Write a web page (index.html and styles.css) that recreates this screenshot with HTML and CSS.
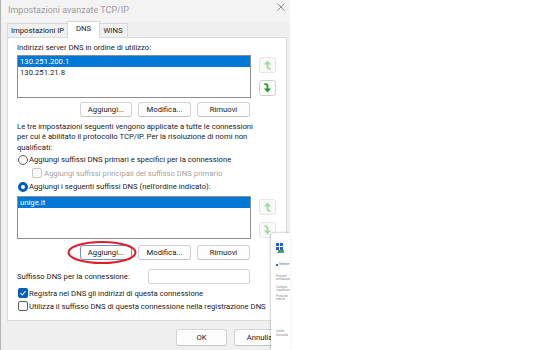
FILE: index.html
```html
<!DOCTYPE html>
<html>
<head>
<meta charset="utf-8">
<link rel="stylesheet" href="styles.css">
</head>
<body>
<div class="dialog">
  <div class="titlebar">
    <span class="title">Impostazioni avanzate TCP/IP</span>
    <svg class="close" width="8" height="8" viewBox="0 0 8 8"><path d="M0.5 0.5 L7.5 7.5 M7.5 0.5 L0.5 7.5" stroke="#8c8c8c" stroke-width="1" fill="none"/></svg>
  </div>
  <div class="tabs">
    <div class="tab t1">Impostazioni IP</div>
    <div class="tab t2 active">DNS</div>
    <div class="tab t3">WINS</div>
  </div>
  <div class="panel">
    <div class="lbl1">Indirizzi server DNS in ordine di utilizzo:</div>
    <div class="listrow">
      <div class="list">
        <div class="item sel">130.251.200.1</div>
        <div class="item">130.251.21.8</div>
      </div>
      <div class="arrows">
        <div class="arrbtn dis"><svg width="9" height="10" viewBox="0 0 10 11"><polygon points="5,0.5 9,5 1,5" fill="#9edb9e"/><path d="M5 4.5 V7.8 Q5 9.8 7.2 9.8 H8.5" stroke="#9edb9e" stroke-width="2" fill="none"/></svg></div>
        <div class="arrbtn"><svg width="9" height="10" viewBox="0 0 10 11"><polygon points="5,10.5 9,6 1,6" fill="#1d9e27"/><path d="M5 6.5 V3.2 Q5 1.2 2.8 1.2 H1.5" stroke="#1d9e27" stroke-width="2" fill="none"/></svg></div>
      </div>
    </div>
    <div class="btnrow">
      <div class="btn w52">Aggiungi...</div>
      <div class="btn">Modifica...</div>
      <div class="btn">Rimuovi</div>
    </div>
    <p class="para">Le tre impostazioni seguenti vengono applicate a tutte le connessioni<br>per cui è abilitato il protocollo TCP/IP. Per la risoluzione di nomi non<br>qualificati:</p>
    <div class="opt r1"><span class="radio"></span><span>Aggiungi suffissi DNS primari e specifici per la connessione</span></div>
    <div class="opt c0 disabled"><span class="check dis"></span><span>Aggiungi suffissi principali del suffisso DNS primario</span></div>
    <div class="opt r2"><span class="radio on"></span><span>Aggiungi i seguenti suffissi DNS (nell'ordine indicato):</span></div>
    <div class="listrow lr2">
      <div class="list">
        <div class="item sel">unige.it</div>
      </div>
      <div class="arrows a2">
        <div class="arrbtn dis"><svg width="9" height="10" viewBox="0 0 10 11"><polygon points="5,0.5 9,5 1,5" fill="#9edb9e"/><path d="M5 4.5 V7.8 Q5 9.8 7.2 9.8 H8.5" stroke="#9edb9e" stroke-width="2" fill="none"/></svg></div>
        <div class="arrbtn dis"><svg width="9" height="10" viewBox="0 0 10 11"><polygon points="5,10.5 9,6 1,6" fill="#9edb9e"/><path d="M5 6.5 V3.2 Q5 1.2 2.8 1.2 H1.5" stroke="#9edb9e" stroke-width="2" fill="none"/></svg></div>
      </div>
    </div>
    <div class="btnrow br2">
      <div class="btn w52 def">Aggiungi...</div>
      <div class="btn">Modifica...</div>
      <div class="btn">Rimuovi</div>
      <svg class="ring" width="70" height="25" viewBox="0 0 70 25"><ellipse cx="35" cy="12.5" rx="33.5" ry="10.5" fill="none" stroke="#dc1f2a" stroke-width="2"/></svg>
    </div>
    <div class="sufrow">
      <span class="suflbl">Suffisso DNS per la connessione:</span>
      <span class="input"></span>
    </div>
    <div class="opt k1"><span class="check on"><svg width="8" height="8" viewBox="0 0 8 8"><path d="M1.5 4.2 L3.3 6 L6.6 2" stroke="#fff" stroke-width="1.1" fill="none"/></svg></span><span>Registra nel DNS gli indirizzi di questa connessione</span></div>
    <div class="opt k2"><span class="check"></span><span>Utilizza il suffisso DNS di questa connessione nella registrazione DNS</span></div>
  </div>
  <div class="footer">
    <div class="btn fb">OK</div>
    <div class="btn fb">Annulla</div>
  </div>
</div>
<div class="miniwin">
  <svg class="miniicon" width="9" height="11" viewBox="0 0 9 11"><rect x="0" y="0" width="3" height="3" fill="#2a5bd0"/><rect x="4" y="0" width="3" height="3" fill="#2a5bd0"/><rect x="0" y="4" width="3" height="3" fill="#2a5bd0"/><rect x="4" y="4" width="3" height="3" fill="#2a5bd0"/><rect x="2" y="7" width="6" height="2" fill="#2fae3a"/><rect x="1" y="9" width="7" height="1" fill="#6b8bd8"/></svg>
  <div class="mline m1"><span class="mdot"></span>Generale</div>
  <div class="mline m2">- - -</div>
  <div class="mline m3">Proprietà<br>connessione</div>
  <div class="mline m4">Configura<br>impostazioni</div>
  <div class="mline m5">Protocollo<br>Internet</div>
  <div class="mline m6">Installa<br>Disinstalla</div>
</div>
</body>
</html>
```

FILE: styles.css
```css
* { box-sizing: border-box; }
body {
  margin: 0;
  width: 560px;
  height: 350px;
  overflow: hidden;
  position: relative;
  background: #ffffff;
  font-family: Roboto, "Noto Sans", sans-serif;
  font-size: 7.7px;
  color: #1b1b1b;
}
.dialog {
  width: 290px;
  height: 350px;
  background: #f0f0f0;
  border-left: 1px solid #b4b4b4;
}
.titlebar {
  height: 22px;
  display: flex;
  justify-content: space-between;
  align-items: center;
  padding: 0 5px 0 7px;
  background: #f3f3f3;
}
.title {
  font-size: 9px;
  color: #9c9c9c;
  margin-top: -3px;
}
.close {
  align-self: flex-start;
  margin-top: 3px;
}
.tabs {
  display: flex;
  align-items: flex-end;
  height: 15px;
  margin-left: 6px;
}
.tab {
  height: 14px;
  border: 1px solid #d9d9d9;
  border-bottom: none;
  text-align: center;
  line-height: 13px;
  background: #f0f0f0;
}
.t1 { width: 61px; }
.t2 { width: 33px; margin-left: -1px; }
.t3 { width: 29px; margin-left: -1px; border-left: none; }
.tab.active {
  height: 17px;
  background: #ffffff;
  margin-bottom: -1px;
  position: relative;
  z-index: 1;
  line-height: 13px;
}
.panel {
  margin-left: 6px;
  width: 280px;
  height: 284px;
  background: #ffffff;
  border: 1px solid #dadada;
  padding-left: 9px;
}
.lbl1 {
  margin-top: 4px;
  line-height: 11px;
}
.listrow {
  display: flex;
  gap: 8px;
  margin-top: 2px;
}
.list {
  width: 234px;
  height: 43px;
  border: 1px solid #8e8e8e;
  background: #fff;
}
.item {
  height: 11px;
  line-height: 11px;
  padding-left: 2px;
  white-space: nowrap;
}
.item.sel {
  background: #0078d7;
  color: #ffffff;
  height: 10.5px;
}
.arrows {
  display: flex;
  flex-direction: column;
  gap: 7px;
  padding-top: 2px;
}
.a2 { padding-top: 3px; }
.arrbtn {
  width: 17px;
  height: 16px;
  border: 1px solid #cfcfcf;
  border-radius: 3px;
  background: #fdfdfd;
  display: flex;
  align-items: center;
  justify-content: center;
}
.arrbtn.dis {
  border-color: #e6e6e6;
  background: #f9f9f9;
}
.btnrow {
  position: relative;
  display: flex;
  justify-content: flex-end;
  gap: 6px;
  width: 233px;
  margin-top: 4px;
}
.br2 { margin-top: 6px; }
.btn {
  width: 53px;
  height: 15px;
  border: 1px solid #d3d3d3;
  border-bottom-color: #c4c4c4;
  border-radius: 3px;
  background: #fdfdfd;
  display: flex;
  align-items: center;
  justify-content: center;
  white-space: nowrap;
}
.btn.w52 { width: 52px; }
.btn.def { border-color: #6f93c4; }
.ring {
  position: absolute;
  left: 50px;
  top: -5px;
}
.para {
  margin: 4.5px 0 0;
  line-height: 10.5px;
  white-space: nowrap;
}
.opt {
  display: flex;
  align-items: center;
  gap: 1px;
  height: 13px;
  white-space: nowrap;
}
.r1 { height: 13px; }
.c0 { height: 14px; padding-left: 15px; gap: 2px; }
.r2 { height: 13px; }
.disabled { color: #a3a3a3; }
.radio {
  width: 10px;
  height: 10px;
  margin-left: 1px;
  border-radius: 50%;
  border: 1px solid #5f5f5f;
  background: #f7f7f7;
  flex: none;
}
.radio.on {
  border: 3px solid #005fb8;
  background: #ffffff;
}
.check {
  width: 10px;
  height: 10px;
  margin-left: 1px;
  border-radius: 2px;
  border: 1px solid #5f5f5f;
  background: #f7f7f7;
  flex: none;
  display: flex;
  align-items: center;
  justify-content: center;
}
.check.dis {
  margin-left: 0;
  border-color: #c6c6c6;
  background: #fafafa;
}
.check.on {
  border: none;
  background: #005fb8;
}
.lr2 { margin-top: 3px; }
.sufrow {
  display: flex;
  align-items: center;
  margin-top: 9px;
  height: 15px;
}
.suflbl { width: 131px; }
.input {
  width: 102px;
  height: 15px;
  border: 1px solid #d4d4d4;
  border-radius: 2px;
  background: #ffffff;
}
.k1 { margin-top: 3px; height: 12px; }
.k2 { height: 14px; }
.footer {
  display: flex;
  gap: 7px;
  margin-top: 8px;
  padding-left: 175px;
}
.btn.fb {
  width: 51px;
  height: 17px;
}
.miniwin {
  position: absolute;
  left: 271px;
  top: 233px;
  width: 19px;
  height: 130px;
  background: #ffffff;
  border-radius: 4px 0 0 4px;
  box-shadow: -1px 0 2px rgba(0,0,0,0.16), 0 -1px 2px rgba(0,0,0,0.1);
  padding: 10px 0 0 5px;
  overflow: hidden;
}
.miniicon { display: block; }
.mline {
  font-size: 2.6px;
  line-height: 3.3px;
  color: #8a8a8a;
  white-space: nowrap;
}
.m1 { margin-top: 9px; color: #5a6fa8; display: flex; align-items: center; gap: 1px; }
.mdot { width: 2px; height: 2px; background: #3a61c8; display: inline-block; }
.m2 { margin-top: 1px; }
.m3 { margin-top: 4px; }
.m4 { margin-top: 5px; }
.m5 { margin-top: 2px; }
.m6 { margin-top: 29px; }
```
